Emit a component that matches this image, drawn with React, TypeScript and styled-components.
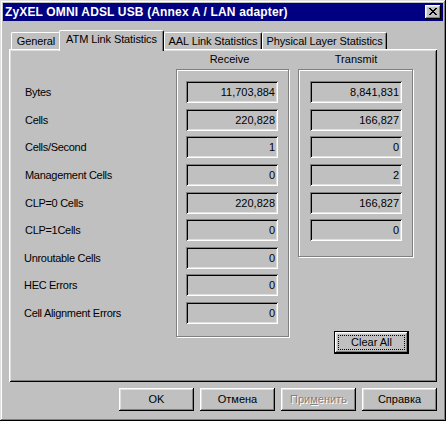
import React from "react";
import styled, { createGlobalStyle } from "styled-components";

const Global = createGlobalStyle`
  html, body { margin: 0; padding: 0; background: #c0c0c0; }
  body { font-family: "Liberation Sans", Arial, sans-serif; font-size: 11px; color: #000; }
  * { box-sizing: border-box; }
`;

const Window = styled.div`
  width: 446px;
  height: 421px;
  padding: 3px;
  background: #c0c0c0;
  display: flex;
  flex-direction: column;
  box-shadow: inset -1px -1px #000, inset 1px 1px #dfdfdf, inset -2px -2px #808080, inset 2px 2px #fff;
`;

const TitleBar = styled.div`
  height: 18px;
  flex: none;
  background: #000080;
  color: #fff;
  display: flex;
  align-items: center;
  justify-content: space-between;
  padding: 0 2px;
  font-weight: bold;
  font-size: 12px;
  letter-spacing: 0.15px;
  white-space: nowrap;
`;

const CloseButton = styled.div`
  width: 16px;
  height: 14px;
  background: #c0c0c0;
  display: flex;
  align-items: flex-start;
  justify-content: flex-start;
  padding: 3px 0 0 4px;
  box-shadow: inset -1px -1px #000, inset 1px 1px #fff, inset -2px -2px #808080, inset 2px 2px #dfdfdf;
`;

const Body = styled.div`
  flex: 1;
  display: flex;
  flex-direction: column;
  padding: 9px 6px 7px 6px;
`;

const TabRow = styled.div`
  height: 21px;
  flex: none;
  margin-bottom: -2px;
  padding-left: 2px;
  display: flex;
  align-items: flex-end;
  position: relative;
  z-index: 1;
`;

const Tab = styled.div<{ $active?: boolean; $w: number }>`
  width: ${(p) => p.$w}px;
  height: ${(p) => (p.$active ? 21 : 17)}px;
  margin-bottom: ${(p) => (p.$active ? 0 : 2)}px;
  margin-left: ${(p) => (p.$active ? -2 : 0)}px;
  padding-bottom: ${(p) => (p.$active ? 4 : 0)}px;
  position: relative;
  z-index: ${(p) => (p.$active ? 2 : 1)};
  background: #c0c0c0;
  border-top: 1px solid #fff;
  border-left: 1px solid #fff;
  border-right: 1px solid #000;
  border-top-left-radius: 2px;
  border-top-right-radius: 2px;
  box-shadow: inset -1px 0 #808080;
  display: flex;
  align-items: center;
  justify-content: center;
  letter-spacing: -0.1px;
  white-space: nowrap;
`;

const Panel = styled.div`
  flex: 1;
  position: relative;
  padding: 0 0 0 16px;
  box-shadow: inset 1px 1px #fff, inset -1px -1px #000, inset 2px 2px #dfdfdf, inset -2px -2px #808080;
`;

const Columns = styled.div`
  display: flex;
  gap: 8px;
  align-items: flex-start;
`;

const LabelColumn = styled.div`
  width: 143px;
  padding-top: 32px;
  display: flex;
  flex-direction: column;
  gap: 5.625px;
`;

const Label = styled.div<{ $shift?: number }>`
  height: 22px;
  display: flex;
  align-items: center;
  margin-left: ${(p) => p.$shift ?? 0}px;
  letter-spacing: -0.3px;
  white-space: nowrap;
`;

const DataColumn = styled.div<{ $w: number }>`
  width: ${(p) => p.$w}px;
  display: flex;
  flex-direction: column;
`;

const Header = styled.div<{ $pr?: number }>`
  height: 20px;
  display: flex;
  align-items: center;
  justify-content: center;
  padding-right: ${(p) => p.$pr ?? 0}px;
`;

const GroupBox = styled.div<{ $w: number; $h: number; $pl: number }>`
  width: ${(p) => p.$w}px;
  height: ${(p) => p.$h}px;
  border: 1px solid #808080;
  box-shadow: inset 1px 1px #fff, 1px 1px #fff;
  padding: 11px 0 0 ${(p) => p.$pl}px;
  display: flex;
  flex-direction: column;
  gap: 5.625px;
`;

const Field = styled.div`
  width: 92px;
  height: 22px;
  flex: none;
  background: #c0c0c0;
  box-shadow: inset 1px 1px #808080, inset -1px -1px #fff, inset 2px 2px #000, inset -2px -2px #dfdfdf;
  display: flex;
  align-items: center;
  justify-content: flex-end;
  padding: 0 3px 0 4px;
`;

const Button = styled.div<{ $disabled?: boolean }>`
  width: 75px;
  height: 23px;
  flex: none;
  background: #c0c0c0;
  display: flex;
  align-items: center;
  justify-content: center;
  padding-bottom: 1px;
  box-shadow: inset -1px -1px #000, inset 1px 1px #fff, inset -2px -2px #808080, inset 2px 2px #dfdfdf;
  color: ${(p) => (p.$disabled ? "#808080" : "#000")};
  text-shadow: ${(p) => (p.$disabled ? "1px 1px 0 #fff" : "none")};
  white-space: nowrap;
`;

const DefaultButton = styled(Button)`
  position: relative;
  align-self: flex-end;
  margin-top: 74px;
  margin-right: 5px;
  border: 1px solid #000;
  &::after {
    content: "";
    position: absolute;
    left: 3px;
    top: 3px;
    right: 3px;
    bottom: 3px;
    border: 1px dotted #000;
  }
`;

const ButtonRow = styled.div`
  flex: none;
  margin-top: 6px;
  display: flex;
  justify-content: flex-end;
  gap: 6px;
`;

const CloseGlyph = () => (
  <svg width="8" height="7" viewBox="0 0 8 7" shapeRendering="crispEdges">
    {[
      [0, 0, 2], [6, 0, 2],
      [1, 1, 2], [5, 1, 2],
      [2, 2, 4],
      [3, 3, 2],
      [2, 4, 4],
      [1, 5, 2], [5, 5, 2],
      [0, 6, 2], [6, 6, 2],
    ].map(([x, y, w], i) => (
      <rect key={i} x={x} y={y} width={w} height={1} fill="#000" />
    ))}
  </svg>
);

const labels: { text: string; shift?: number }[] = [
  { text: "Bytes" },
  { text: "Cells" },
  { text: "Cells/Second" },
  { text: "Management Cells" },
  { text: "CLP=0 Cells" },
  { text: "CLP=1Cells" },
  { text: "Unroutable Cells", shift: -1 },
  { text: "HEC Errors", shift: -1 },
  { text: "Cell Alignment Errors", shift: -1 },
];

const receive = ["11,703,884", "220,828", "1", "0", "220,828", "0", "0", "0", "0"];
const transmit = ["8,841,831", "166,827", "0", "2", "166,827", "0"];

const tabs = [
  { text: "General", w: 50 },
  { text: "ATM Link Statistics", w: 105, active: true },
  { text: "AAL Link Statistics", w: 98 },
  { text: "Physical Layer Statistics", w: 125 },
];

export default function App() {
  return (
    <>
      <Global />
      <Window>
        <TitleBar>
          <span>ZyXEL OMNI ADSL USB (Annex A / LAN adapter)</span>
          <CloseButton>
            <CloseGlyph />
          </CloseButton>
        </TitleBar>
        <Body>
          <TabRow>
            {tabs.map((t) => (
              <Tab key={t.text} $w={t.w} $active={t.active}>
                {t.text}
              </Tab>
            ))}
          </TabRow>
          <Panel>
            <Columns>
              <LabelColumn>
                {labels.map((l) => (
                  <Label key={l.text} $shift={l.shift}>
                    {l.text}
                  </Label>
                ))}
              </LabelColumn>
              <DataColumn $w={114}>
                <Header $pr={7}>Receive</Header>
                <GroupBox $w={113} $h={268} $pl={9}>
                  {receive.map((v, i) => (
                    <Field key={i}>{v}</Field>
                  ))}
                </GroupBox>
              </DataColumn>
              <DataColumn $w={116}>
                <Header>Transmit</Header>
                <GroupBox $w={115} $h={188} $pl={11}>
                  {transmit.map((v, i) => (
                    <Field key={i}>{v}</Field>
                  ))}
                </GroupBox>
                <DefaultButton>Clear All</DefaultButton>
              </DataColumn>
            </Columns>
          </Panel>
          <ButtonRow>
            <Button>OK</Button>
            <Button>Отмена</Button>
            <Button $disabled>
              При<u>м</u>енить
            </Button>
            <Button>Справка</Button>
          </ButtonRow>
        </Body>
      </Window>
    </>
  );
}
